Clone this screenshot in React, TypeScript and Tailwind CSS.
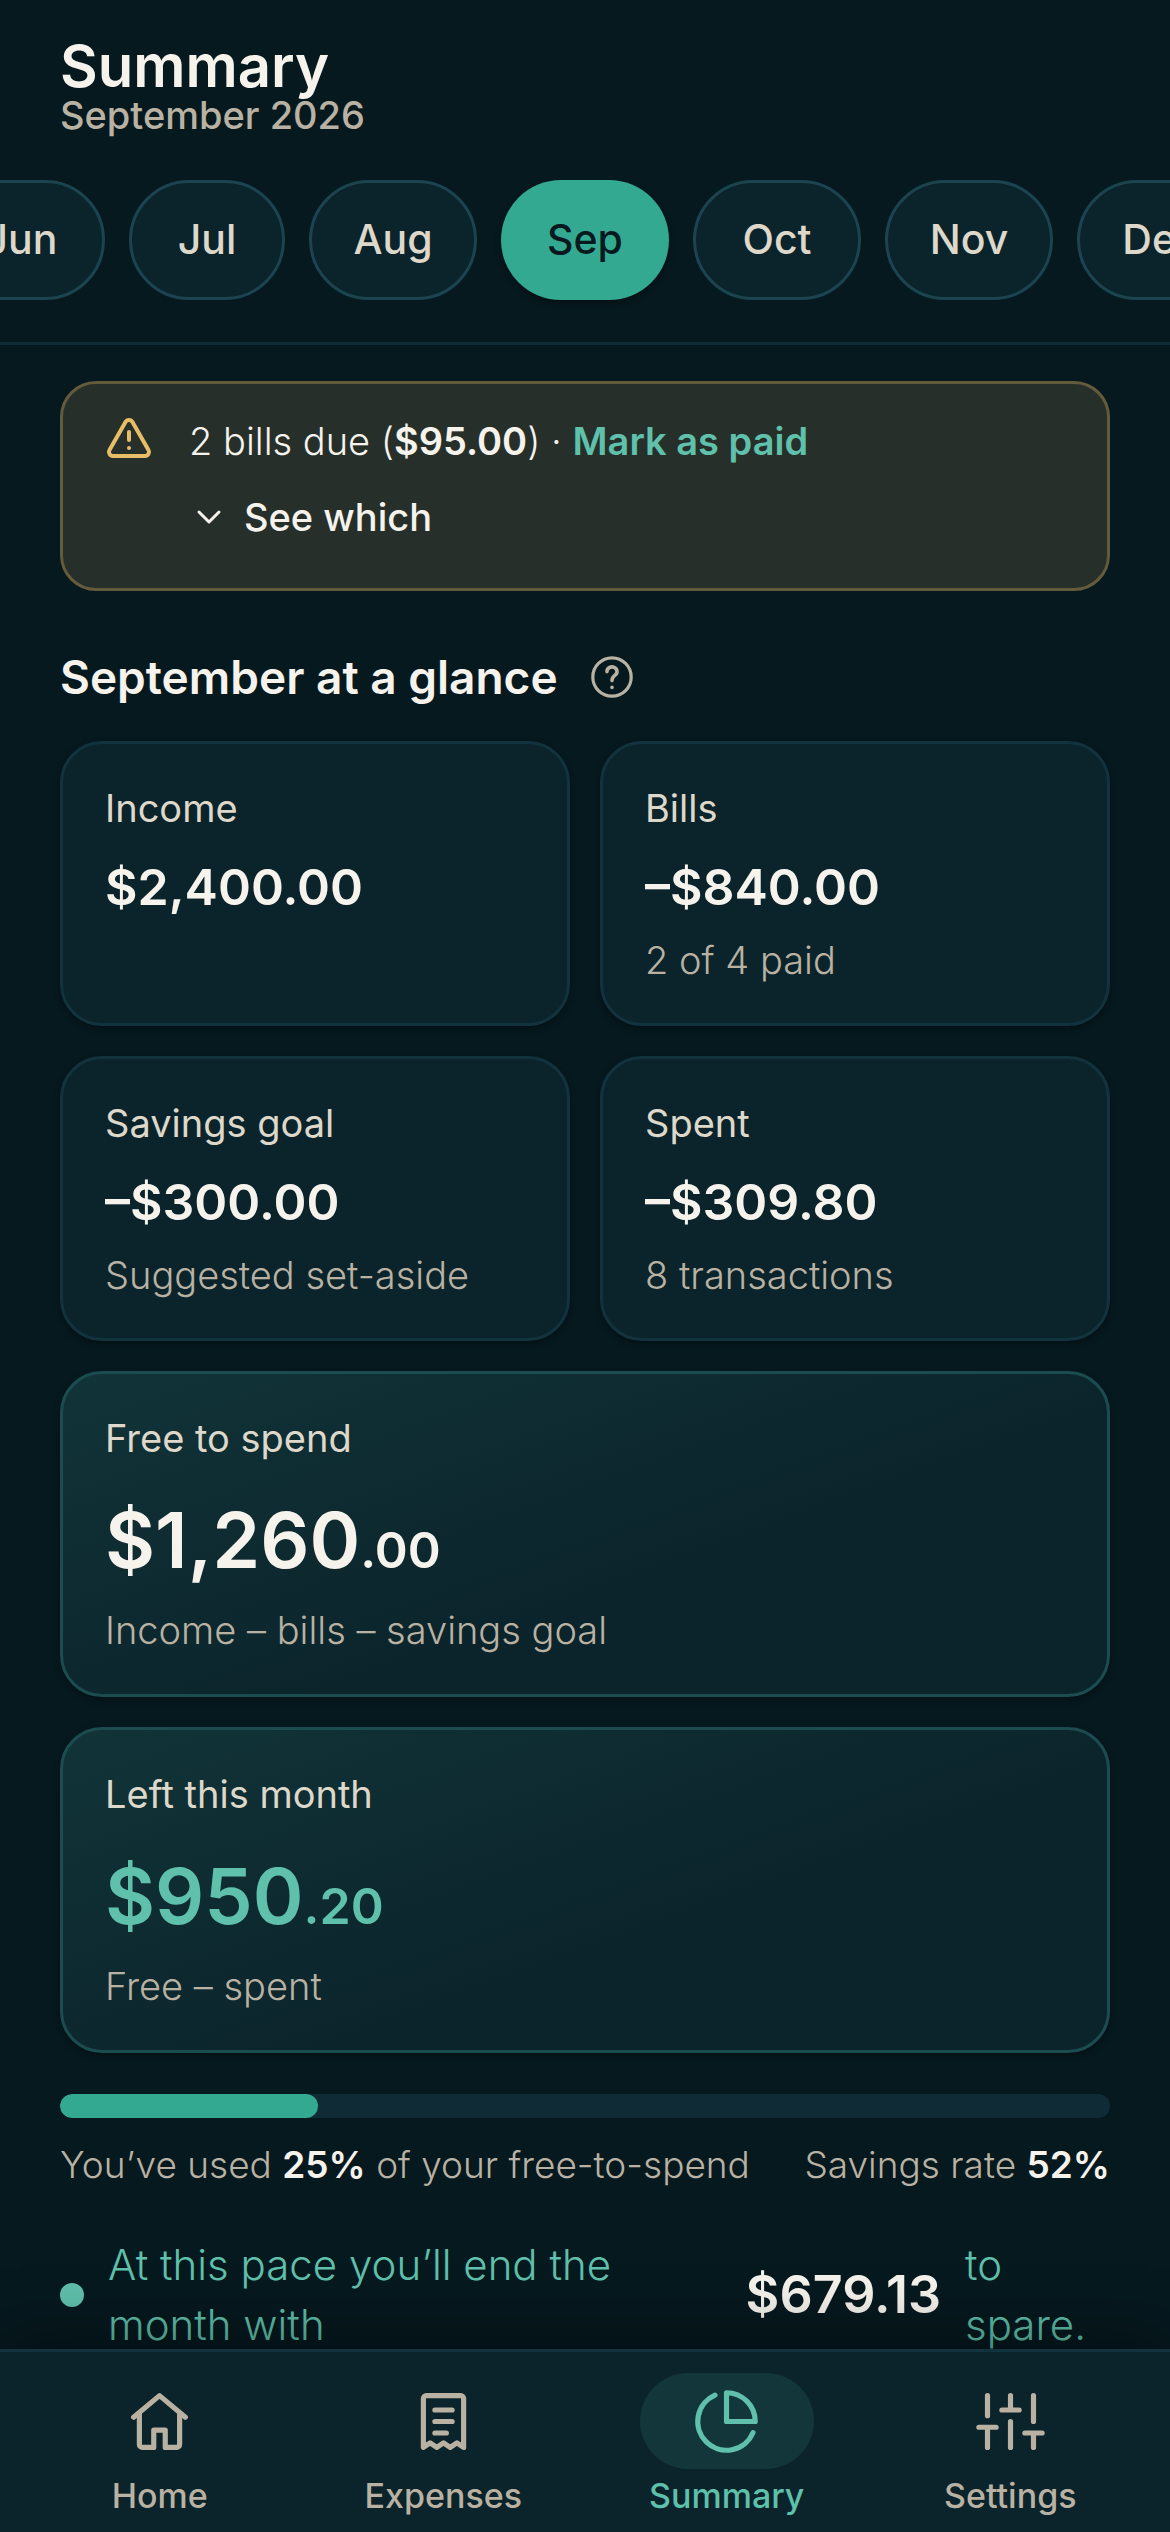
import React from 'react';
import { ChevronDown, TriangleAlert } from 'lucide-react';

interface StatCardProps {
  label: string;
  amount: string;
  note?: string;
}

interface HeroCardProps {
  label: string;
  whole: string;
  cents: string;
  note: string;
  amountClass: string;
}

interface IconProps {
  children: React.ReactNode;
}

const months = ['Jun', 'Jul', 'Aug', 'Sep', 'Oct', 'Nov', 'Dec'];
const activeMonth = 'Sep';

const freeToSpend = 1260;
const spent = 309.8;
const usedPercent = (spent / freeToSpend) * 100;

const chipClass = (month: string) => {
  if (month === activeMonth) {
    return 'w-[168px] bg-[#34a991] text-[#06191f] shadow-[0_3px_6px_rgba(0,0,0,0.4)]';
  }
  const width = month === 'Jul' ? 'w-[156px]' : 'w-[168px]';
  return `${width} border-3 border-[#1b4450] bg-[#0b242b] text-[#ded8ca]`;
};

const StatCard: React.FC<StatCardProps> = ({ label, amount, note }) => (
  <div className="min-h-[285px] rounded-[42px] border-3 border-[#12333d] bg-[#0b242b] px-[42px] pt-10 shadow-[0_3px_6px_rgba(0,0,0,0.35)]">
    <h3 className="text-[38px] leading-[48px] text-[#ded8ca]">{label}</h3>
    <p className="mt-5 text-[50px] leading-[70px] font-semibold text-[#f6f3ed]">{amount}</p>
    {note && <p className="mt-3.5 text-[38px] leading-[48px] font-light text-[#b9b2a3]">{note}</p>}
  </div>
);

const HeroCard: React.FC<HeroCardProps> = ({ label, whole, cents, note, amountClass }) => (
  <div className="min-h-[326px] rounded-[42px] border-3 border-[#1a4c50] bg-[#0b242b] bg-linear-160 from-[#113438] to-[#0b242b] to-60% px-[42px] pt-10 shadow-[0_3px_6px_rgba(0,0,0,0.35)]">
    <h3 className="text-[38px] leading-[48px] text-[#ded8ca]">{label}</h3>
    <p className={`mt-[30px] text-[77px] leading-[96px] font-semibold ${amountClass}`}>
      {whole}
      <span className="text-[50px]">{cents}</span>
    </p>
    <p className="mt-2 text-[38px] leading-[48px] font-light text-[#b9b2a3]">{note}</p>
  </div>
);

const NavIcon: React.FC<IconProps> = ({ children }) => (
  <svg
    className="size-[69px] overflow-visible"
    viewBox="0 0 24 24"
    fill="none"
    stroke="currentColor"
    strokeWidth="1.8"
    strokeLinecap="round"
    strokeLinejoin="round"
    aria-hidden="true"
  >
    {children}
  </svg>
);

const navItems = [
  {
    label: 'Home',
    icon: (
      <>
        <path d="M3 10.5 12 3l9 7.5" />
        <path d="M5 9.5V20a1 1 0 0 0 1 1h4v-6h4v6h4a1 1 0 0 0 1-1V9.5" />
      </>
    ),
  },
  {
    label: 'Expenses',
    icon: (
      <>
        <path d="M5 21V4a1 1 0 0 1 1-1h12a1 1 0 0 1 1 1v17l-2.33-1.6L14.33 21 12 19.4 9.67 21l-2.34-1.6z" />
        <path d="M9 8h6M9 12h6M9 16h4" />
      </>
    ),
  },
  {
    label: 'Summary',
    icon: (
      <>
        <path d="M21.21 15.89A10 10 0 1 1 8 2.83" />
        <path d="M22 12A10 10 0 0 0 12 2v10z" />
      </>
    ),
  },
  {
    label: 'Settings',
    icon: <path d="M4 21v-7M4 10V3M12 21v-9M12 8V3M20 21v-5M20 12V3M1 14h6M9 8h6M17 16h6" />,
  },
];

const App: React.FC = () => {
  return (
    <div className="flex h-screen flex-col overflow-hidden bg-[#06191f] font-['Inter',sans-serif] text-[#f6f3ed]">
      <header className="shrink-0 border-b-3 border-[#0f2c36] pt-9 pb-[42px]">
        <h1 className="px-[60px] text-[58px] leading-[60px] font-semibold">Summary</h1>
        <p className="px-[60px] text-[38px] leading-[39px] font-medium text-[#b9b2a3]">September 2026</p>
        <div className="mt-[45px] -mb-3 flex justify-center gap-6 overflow-hidden pb-3 pl-3">
          {months.map((month) => (
            <button
              key={month}
              type="button"
              className={`h-[120px] shrink-0 rounded-full text-[41px] font-medium ${chipClass(month)}`}
            >
              {month}
            </button>
          ))}
        </div>
      </header>

      <main className="min-h-0 flex-1 overflow-hidden px-[60px] pt-9">
        <section className="flex min-h-[210px] gap-9 rounded-[36px] border-3 border-[#645a3c] bg-[#272f2a] px-[42px] pt-[27px]">
          <TriangleAlert className="mt-[3px] size-12 shrink-0 text-[#e7bd68]" />
          <div>
            <p className="text-[38px] leading-[60px] font-light">
              2 bills due (<strong className="font-semibold">$95.00</strong>) ·{' '}
              <button type="button" className="font-semibold text-[#5fc0ab]">Mark as paid</button>
            </p>
            <button type="button" className="mt-4 flex items-center gap-[15px] text-[38px] leading-[60px] font-medium">
              <ChevronDown className="size-10" strokeWidth={1.8} />
              See which
            </button>
          </div>
        </section>

        <div className="mt-14 flex items-center gap-[30px]">
          <h2 className="text-[46px] leading-[60px] font-semibold">September at a glance</h2>
          <button type="button" aria-label="About these figures" className="text-[#b9b2a3]">
            <svg className="size-12" viewBox="0 0 24 24" fill="none" stroke="currentColor" strokeLinecap="round">
              <circle cx="12" cy="12" r="9.6" strokeWidth="1.6" />
              <path d="M9.5 9.3a2.5 2.3 0 1 1 4 1.8c-.9.7-1.5 1.1-1.5 2.7" strokeWidth="1.8" />
              <path d="M12 17.2v.01" strokeWidth="1.8" />
            </svg>
          </button>
        </div>

        <div className="mt-[34px] grid grid-cols-2 gap-[30px]">
          <StatCard label="Income" amount="$2,400.00" />
          <StatCard label="Bills" amount="–$840.00" note="2 of 4 paid" />
          <StatCard label="Savings goal" amount="–$300.00" note="Suggested set-aside" />
          <StatCard label="Spent" amount="–$309.80" note="8 transactions" />
        </div>
        <div className="mt-[30px] grid gap-[30px]">
          <HeroCard label="Free to spend" whole="$1,260" cents=".00" note="Income – bills – savings goal" amountClass="text-[#f6f3ed]" />
          <HeroCard label="Left this month" whole="$950" cents=".20" note="Free – spent" amountClass="text-[#5fc0ab]" />
        </div>

        <div className="mt-[41px] h-6 overflow-hidden rounded-full bg-[#0f2c36]">
          <div className="h-full rounded-full bg-[#34a991]" style={{ width: `${usedPercent}%` }} />
        </div>
        <div className="mt-5 flex justify-between text-[37px] leading-[54px] font-light text-[#b9b2a3]">
          <p>You’ve used <strong className="font-semibold text-[#f6f3ed]">{Math.round(usedPercent)}%</strong> of your free-to-spend</p>
          <p>Savings rate <strong className="font-semibold text-[#f6f3ed]">52%</strong></p>
        </div>
        <div className="mt-[43px] flex items-center gap-6 text-[42px] leading-[60px] font-light text-[#5fc0ab]">
          <span className="size-6 shrink-0 rounded-full bg-[#5fc0ab]" />
          <span className="flex-1">At this pace you’ll end the month with</span>
          <strong className="text-[52px] font-semibold text-[#f6f3ed]">$679.13</strong>
          <span className="w-[145px]">to spare.</span>
        </div>
      </main>

      <nav className="z-10 grid shrink-0 grid-cols-4 border-t-3 border-[#12333d] bg-[#0b242b] px-[18px] pt-[21px] pb-3 shadow-[0_-12px_60px_rgba(0,0,0,0.4)]">
        {navItems.map((item) => (
          <a
            key={item.label}
            href={`#${item.label.toLowerCase()}`}
            className={`flex flex-col items-center gap-[3px] ${item.label === 'Summary' ? 'text-[#5fc0ab]' : 'text-[#b9b2a3]'}`}
          >
            <span className={`flex h-24 w-[174px] items-center justify-center rounded-full ${item.label === 'Summary' ? 'bg-[#12363a]' : ''}`}>
              <NavIcon>{item.icon}</NavIcon>
            </span>
            <span className="text-[34px] leading-12 font-medium">{item.label}</span>
          </a>
        ))}
      </nav>
    </div>
  );
};

export default App;
